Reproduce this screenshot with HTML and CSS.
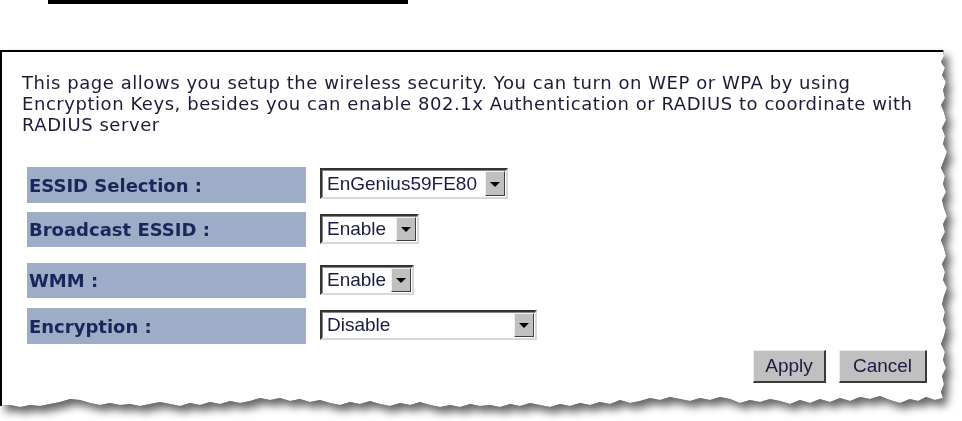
FILE: index.html
```html
<!DOCTYPE html>
<html>
<head>
<meta charset="utf-8">
<link rel="stylesheet" href="styles.css">
</head>
<body>
<div class="topbar"></div>
<div class="sheet-wrap">
  <div class="sheet">
    <p class="intro">This page allows you setup the wireless security. You can turn on WEP or WPA by using<br>Encryption Keys, besides you can enable 802.1x Authentication or RADIUS to coordinate with<br>RADIUS server</p>
    <div class="form">
      <div class="row row-1">
        <div class="label">ESSID Selection :</div>
        <div class="select sel-essid"><span class="val">EnGenius59FE80</span><span class="arrow"></span></div>
      </div>
      <div class="row row-2">
        <div class="label">Broadcast ESSID :</div>
        <div class="select sel-bcast"><span class="val">Enable</span><span class="arrow"></span></div>
      </div>
      <div class="row row-3">
        <div class="label">WMM :</div>
        <div class="select sel-wmm"><span class="val">Enable</span><span class="arrow"></span></div>
      </div>
      <div class="row row-4">
        <div class="label">Encryption :</div>
        <div class="select sel-enc"><span class="val">Disable</span><span class="arrow"></span></div>
      </div>
    </div>
    <div class="actions">
      <button class="btn btn-apply">Apply</button>
      <button class="btn btn-cancel">Cancel</button>
    </div>
  </div>
</div>
</body>
</html>
```
FILE: styles.css
```css
html, body {
  margin: 0;
  padding: 0;
  background: #ffffff;
}
body {
  width: 962px;
  height: 421px;
  overflow: hidden;
  font-family: "DejaVu Sans", Verdana, sans-serif;
}
.topbar {
  margin-left: 48px;
  width: 360px;
  height: 4px;
  background: #000;
}
.sheet-wrap {
  margin-top: 46px;
  filter: drop-shadow(0 0 0.7px rgba(0,0,0,0.95)) drop-shadow(5px 6px 4px rgba(0,0,0,0.6));
}
.sheet {
  box-sizing: border-box;
  width: 950px;
  height: 362px;
  background: #fff;
  border-top: 2px solid #000;
  border-left: 2px solid #000;
  padding: 20px 0 0 20px;
  display: flex;
  flex-direction: column;
  clip-path: polygon(0 0, 943px 0, 944px 6px, 941px 12px, 945px 18px, 942px 25px, 946px 32px, 943px 40px, 945px 48px, 941px 55px, 944px 62px, 946px 70px, 942px 78px, 945px 86px, 943px 94px, 947px 102px, 944px 110px, 941px 118px, 945px 126px, 943px 134px, 946px 142px, 942px 150px, 944px 158px, 947px 166px, 943px 174px, 945px 182px, 941px 190px, 944px 198px, 946px 206px, 942px 214px, 945px 222px, 943px 230px, 947px 238px, 944px 246px, 942px 254px, 945px 262px, 943px 270px, 946px 278px, 944px 286px, 941px 294px, 945px 302px, 943px 310px, 946px 318px, 942px 326px, 944px 334px, 941px 342px, 943px 348px,
    935px 350px, 926px 347px, 918px 351px, 910px 349px, 900px 353px, 890px 350px, 880px 346px, 870px 349px, 860px 347px, 850px 351px, 840px 348px, 830px 352px, 820px 349px, 810px 353px, 800px 350px, 790px 354px, 780px 351px, 770px 349px, 760px 352px, 750px 350px, 740px 353px, 730px 349px, 720px 347px, 710px 350px, 700px 348px, 690px 351px, 680px 349px, 670px 347px, 660px 350px, 650px 348px, 640px 351px, 630px 353px, 620px 350px, 610px 354px, 600px 352px, 590px 355px, 580px 353px, 570px 356px, 560px 354px, 550px 357px, 540px 355px, 530px 353px, 520px 356px, 510px 354px, 500px 357px, 490px 355px, 480px 356px, 470px 354px, 460px 357px, 450px 355px, 440px 357px, 430px 355px, 420px 352px, 410px 355px, 400px 353px, 390px 356px, 380px 354px, 370px 351px, 360px 354px, 350px 352px, 340px 355px, 330px 353px, 320px 350px, 310px 352px, 300px 349px, 290px 351px, 280px 348px, 270px 350px, 260px 348px, 250px 351px, 240px 353px, 230px 351px, 220px 354px, 210px 352px, 200px 355px, 190px 353px, 180px 356px, 170px 354px, 160px 352px, 150px 354px, 140px 356px, 130px 354px, 120px 355px, 110px 353px, 100px 355px, 90px 353px, 80px 350px, 70px 349px, 60px 352px, 50px 354px, 40px 356px, 30px 355px, 20px 357px, 10px 355px, 0 356px);
}
.intro {
  margin: 0;
  font-size: 18px;
  letter-spacing: 0.55px;
  line-height: 21px;
  color: #1c1c38;
  white-space: nowrap;
}
.form {
  margin: 32px 0 0 5px;
  display: flex;
  flex-direction: column;
}
.row {
  display: flex;
  align-items: flex-start;
  gap: 14px;
}
.row-1 { height: 36px; margin-bottom: 9px; }
.row-2 { height: 35px; margin-bottom: 16px; }
.row-3 { height: 35px; margin-bottom: 10px; }
.row-4 { height: 36px; }
.label {
  box-sizing: border-box;
  width: 279px;
  height: 100%;
  background: #9dacc7;
  padding-left: 2px;
  display: flex;
  align-items: center;
  font-weight: bold;
  font-size: 18px;
  color: #17275a;
  white-space: nowrap;
}
.select {
  box-sizing: border-box;
  height: 30px;
  margin-top: 2px;
  background: #fff;
  border-top: 2px solid #333;
  border-left: 2px solid #333;
  border-right: 2px solid #d8d8d8;
  border-bottom: 2px solid #d8d8d8;
  box-shadow: 1px 1px 0 #888 inset;
  display: flex;
  align-items: stretch;
  font-family: "Liberation Sans", Arial, sans-serif;
  font-size: 19px;
  color: #1b1b45;
}
.row-1 .select { margin-top: 1px; height: 31px; }
.sel-essid { width: 188px; }
.sel-bcast { width: 99px; }
.sel-wmm { width: 94px; }
.sel-enc { width: 217px; }
.val {
  flex: 1;
  display: flex;
  align-items: center;
  padding-left: 5px;
  white-space: nowrap;
}
.arrow {
  position: relative;
  box-sizing: border-box;
  width: 20px;
  margin: 1px 1px 1px 0;
  background: #c0c0c0;
  border-top: 1px solid #f0f0f0;
  border-left: 1px solid #f0f0f0;
  border-right: 1px solid #404040;
  border-bottom: 1px solid #404040;
}
.arrow::after {
  content: "";
  position: absolute;
  left: 50%;
  top: 50%;
  margin-left: -5px;
  margin-top: -2px;
  border-left: 5px solid transparent;
  border-right: 5px solid transparent;
  border-top: 5px solid #000;
}
.actions {
  display: flex;
  justify-content: flex-end;
  gap: 13px;
  margin: 6px 23px 0 0;
}
.btn {
  box-sizing: border-box;
  height: 33px;
  padding: 0;
  background: #c0c0c0;
  border-top: 1px solid #ececec;
  border-left: 1px solid #ececec;
  border-right: 2px solid #3a3a3a;
  border-bottom: 2px solid #3a3a3a;
  font-family: "Liberation Sans", Arial, sans-serif;
  font-size: 19px;
  color: #1b1b45;
}
.btn-apply { width: 73px; }
.btn-cancel { width: 88px; }
```
